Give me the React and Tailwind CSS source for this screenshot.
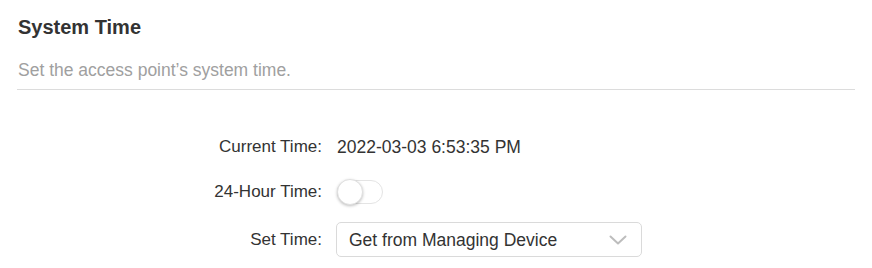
const Row = ({ label, children }) => (
  <div className="flex items-center">
    <div className="w-[305px] text-right text-[17px] leading-[20px] text-[#333]">{label}</div>
    <div className="ml-[15px] flex items-center">{children}</div>
  </div>
);

const App = () => {
  return (
    <div className="min-h-screen bg-white px-[17px] font-['Liberation_Sans',Arial,sans-serif]">
      {/* Header */}
      <div className="border-b border-[#dcdcdc] pt-[15px] pb-[8px]">
        <h2 className="pl-[1px] text-[20px] font-bold text-[#333] leading-[24px]">System Time</h2>
        <p className="mt-[20px] pl-[1px] text-[17.5px] text-[#a0a0a0] leading-[22px]">Set the access point’s system time.</p>
      </div>

      {/* Settings */}
      <div className="mt-[47px] flex flex-col">
        <Row label="Current Time:">
          <span className="text-[17.5px] leading-[20px] text-[#333]">2022-03-03 6:53:35 PM</span>
        </Row>
        <div className="mt-[23px]">
          <Row label="24-Hour Time:">
            <div className="relative h-[24px] w-[46px] rounded-full border border-[#e4e4e4] bg-white">
              <div className="absolute -left-[1px] -top-[2px] h-[26px] w-[26px] rounded-full border border-[#e0e0e0] bg-white shadow-[0_1px_3px_rgba(0,0,0,0.25)]" />
            </div>
          </Row>
        </div>
        <div className="mt-[18px]">
          <Row label="Set Time:">
            <div className="-ml-[1px] flex h-[35px] w-[306px] items-center justify-between rounded-[5px] border border-[#dadada] pl-[12px] pr-[14px]">
              <span className="text-[17.5px] leading-[20px] text-[#333]">Get from Managing Device</span>
              <svg width="18" height="10" viewBox="0 0 18 10" fill="none">
                <path d="M1.5 1.5 L9 8.5 L16.5 1.5" stroke="#bdbdbd" strokeWidth="2" strokeLinecap="round" strokeLinejoin="round" />
              </svg>
            </div>
          </Row>
        </div>
      </div>
    </div>
  );
};

export default App;
